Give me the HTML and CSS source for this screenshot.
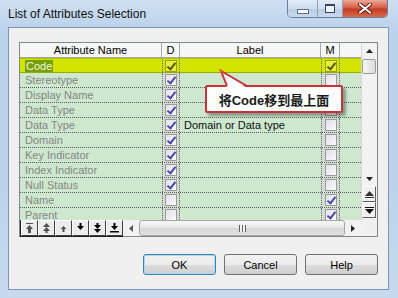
FILE: index.html
```html
<!DOCTYPE html>
<html lang="en">
<head>
    <meta charset="UTF-8">
    <title>List of Attributes Selection</title>
    <link rel="stylesheet" href="styles.css">
</head>
<body>
    <div class="window">
        <div class="titlebar">
            <span class="title">List of Attributes Selection</span>
            <div class="caption">
                <span class="cb min"><span class="dash"></span></span>
                <span class="cb max"><span class="square"></span></span>
                <span class="cb close">
                    <svg width="14" height="11" viewBox="0 0 14 11"><path d="M2 1.5 L12 9.5 M12 1.5 L2 9.5" stroke="#5a1a10" stroke-width="4" stroke-linecap="round"/><path d="M2 1.5 L12 9.5 M12 1.5 L2 9.5" stroke="#fff" stroke-width="2.2" stroke-linecap="round"/></svg>
                </span>
            </div>
        </div>
        <div class="client">
            <div class="gridbox">
                <div class="table">
                    <div class="row head">
                        <div class="c name">Attribute Name</div>
                        <div class="c d">D</div>
                        <div class="c label">Label</div>
                        <div class="c m">M</div>
                        <div class="c fill"></div>
                    </div>
                    <div class="row sel">
                        <div class="c name"><span class="hl">Code</span></div>
                        <div class="c d"><span class="chk on"></span></div>
                        <div class="c label"></div>
                        <div class="c m"><span class="chk on"></span></div>
                        <div class="c fill"></div>
                    </div>
                    <div class="row">
                        <div class="c name">Stereotype</div>
                        <div class="c d"><span class="chk on"></span></div>
                        <div class="c label"></div>
                        <div class="c m"><span class="chk"></span></div>
                        <div class="c fill"></div>
                    </div>
                    <div class="row">
                        <div class="c name">Display Name</div>
                        <div class="c d"><span class="chk on"></span></div>
                        <div class="c label"></div>
                        <div class="c m"><span class="chk on"></span></div>
                        <div class="c fill"></div>
                    </div>
                    <div class="row">
                        <div class="c name">Data Type</div>
                        <div class="c d"><span class="chk on"></span></div>
                        <div class="c label"></div>
                        <div class="c m"><span class="chk"></span></div>
                        <div class="c fill"></div>
                    </div>
                    <div class="row">
                        <div class="c name">Data Type</div>
                        <div class="c d"><span class="chk on"></span></div>
                        <div class="c label">Domain or Data type</div>
                        <div class="c m"><span class="chk"></span></div>
                        <div class="c fill"></div>
                    </div>
                    <div class="row">
                        <div class="c name">Domain</div>
                        <div class="c d"><span class="chk on"></span></div>
                        <div class="c label"></div>
                        <div class="c m"><span class="chk"></span></div>
                        <div class="c fill"></div>
                    </div>
                    <div class="row">
                        <div class="c name">Key Indicator</div>
                        <div class="c d"><span class="chk on"></span></div>
                        <div class="c label"></div>
                        <div class="c m"><span class="chk"></span></div>
                        <div class="c fill"></div>
                    </div>
                    <div class="row">
                        <div class="c name">Index Indicator</div>
                        <div class="c d"><span class="chk on"></span></div>
                        <div class="c label"></div>
                        <div class="c m"><span class="chk"></span></div>
                        <div class="c fill"></div>
                    </div>
                    <div class="row">
                        <div class="c name">Null Status</div>
                        <div class="c d"><span class="chk on"></span></div>
                        <div class="c label"></div>
                        <div class="c m"><span class="chk"></span></div>
                        <div class="c fill"></div>
                    </div>
                    <div class="row">
                        <div class="c name">Name</div>
                        <div class="c d"><span class="chk"></span></div>
                        <div class="c label"></div>
                        <div class="c m"><span class="chk on"></span></div>
                        <div class="c fill"></div>
                    </div>
                    <div class="row">
                        <div class="c name">Parent</div>
                        <div class="c d"><span class="chk"></span></div>
                        <div class="c label"></div>
                        <div class="c m"><span class="chk on"></span></div>
                        <div class="c fill"></div>
                    </div>
                </div>

                <div class="vscroll">
                    <div class="arrow">
                        <svg width="7" height="4" viewBox="0 0 7 4"><path d="M3.5 0 L7 4 H0 Z" fill="#222"/></svg>
                    </div>
                    <div class="vthumb"></div>
                    <div class="track"></div>
                    <div class="arrow">
                        <svg width="7" height="4" viewBox="0 0 7 4"><path d="M0 0 H7 L3.5 4 Z" fill="#222"/></svg>
                    </div>
                    <div class="vbtn">
                        <svg width="9" height="7" viewBox="0 0 9 7"><path d="M4.5 0 L9 5 H0 Z" fill="#333"/><rect x="0" y="6" width="9" height="1" fill="#333"/></svg>
                    </div>
                    <div class="vbtn">
                        <svg width="9" height="7" viewBox="0 0 9 7"><rect x="0" y="0" width="9" height="1" fill="#111"/><path d="M0 2 H9 L4.5 7 Z" fill="#111"/></svg>
                    </div>
                </div>

                <div class="hbar">
                    <div class="tools">
                        <span class="tb dim"><svg width="9" height="10" viewBox="0 0 9 10"><rect x="1" y="0" width="7" height="1"/><path d="M4.5 2 L8 6 H6 V10 H3 V6 H1 Z"/></svg></span>
                        <span class="tb dim"><svg width="9" height="10" viewBox="0 0 9 10"><path d="M4.5 0 L8 4 H1 Z M4.5 4 L8 8 H1 Z"/><rect x="3.5" y="8" width="2" height="2"/></svg></span>
                        <span class="tb dim"><svg width="9" height="10" viewBox="0 0 9 10"><path d="M4.5 3 L7.5 6 H5.5 V9 H3.5 V6 H1.5 Z"/></svg></span>
                        <span class="tb"><svg width="9" height="10" viewBox="0 0 9 10"><path d="M3.5 0 H5.5 V3 H8 L4.5 7 L1 3 H3.5 Z"/></svg></span>
                        <span class="tb"><svg width="9" height="10" viewBox="0 0 9 10"><rect x="3.5" y="0" width="2" height="2"/><path d="M1 2 H8 L4.5 6 Z M1 6 H8 L4.5 10 Z"/></svg></span>
                        <span class="tb"><svg width="9" height="10" viewBox="0 0 9 10"><path d="M3.5 0 H5.5 V3 H8 L4.5 7 L1 3 H3.5 Z"/><rect x="0" y="8" width="9" height="1.5"/></svg></span>
                    </div>
                    <div class="harrow">
                        <svg width="4" height="7" viewBox="0 0 4 7"><path d="M4 0 V7 L0 3.5 Z" fill="#555"/></svg>
                    </div>
                    <div class="hthumb"><span class="grip"></span></div>
                    <div class="harrow">
                        <svg width="4" height="7" viewBox="0 0 4 7"><path d="M0 0 V7 L4 3.5 Z" fill="#222"/></svg>
                    </div>
                </div>
                <div class="corner"></div>

                <div class="callout">
                    <span>将Code移到最上面</span>
                </div>
                <svg class="pointer" width="32" height="20" viewBox="0 0 32 20">
                    <path d="M8 19 L2 2 L28 19 Z" fill="#fff"/>
                    <path d="M8 17 L2 2 L28 17" fill="none" stroke="#c8323a" stroke-width="2"/>
                    <circle cx="2.5" cy="2.5" r="1.5" fill="#e06a20"/>
                </svg>
            </div>

            <div class="buttons">
                <button class="btn default">OK</button>
                <button class="btn">Cancel</button>
                <button class="btn">Help</button>
            </div>
        </div>
    </div>
</body>
</html>
```

FILE: styles.css
```css
body {
    margin: 0;
    font-family: "Liberation Sans", Arial, sans-serif;
}

.window {
    width: 398px;
    height: 298px;
    box-sizing: border-box;
    padding: 0 9px 8px 8px;
    display: flex;
    flex-direction: column;
    background: linear-gradient(to bottom, #cfdff1 0, #bcd3ec 28px, #bdd3eb 60%, #c6d9ee 100%);
}

.titlebar {
    height: 27px;
    display: flex;
    align-items: flex-start;
}

.title {
    font-size: 12px;
    color: #111;
    padding-top: 7px;
}

.caption {
    margin-left: auto;
    margin-right: 1px;
    display: flex;
    height: 18px;
    border: 1px solid #6a7f99;
    border-top: none;
    border-radius: 0 0 5px 5px;
    overflow: hidden;
    box-sizing: border-box;
}

.cb {
    display: flex;
    align-items: center;
    justify-content: center;
    box-sizing: border-box;
}

.cb.min {
    width: 30px;
    border-right: 1px solid #8ba1bc;
    background: linear-gradient(#e3ecf7, #cddcee 50%, #b9cce3 51%, #c9daee);
}

.cb.max {
    width: 25px;
    border-right: 1px solid #8ba1bc;
    background: linear-gradient(#e3ecf7, #cddcee 50%, #b9cce3 51%, #c9daee);
}

.cb.close {
    width: 44px;
    background: linear-gradient(#eaa898, #d65a42 48%, #c23a20 52%, #d76a4c);
}

.dash {
    width: 10px;
    height: 3px;
    margin-top: 6px;
    background: #fff;
    border: 1px solid #5c6f86;
}

.square {
    width: 8px;
    height: 6px;
    border: 1px solid #34465c;
    border-top-width: 2px;
    background: #eef3fa;
}

.client {
    flex: 1;
    background: #f0f0f0;
    border: 1px solid #7f97b4;
    padding: 14px 10px 0 10px;
}

.gridbox {
    position: relative;
    display: grid;
    grid-template-columns: 341px 16px;
    grid-template-rows: 177px 16px;
    border: 1px solid #828790;
    background: #f4f4f4;
}

.table {
    overflow: hidden;
    background: #cde8cf;
}

.row {
    display: flex;
    height: 15px;
    box-sizing: border-box;
    border-bottom: 1px dotted #5a5a5a;
    font-size: 11px;
    line-height: 14px;
}

.c {
    box-sizing: border-box;
    white-space: nowrap;
    overflow: hidden;
}

.c.name {
    width: 142px;
    padding-left: 5px;
    color: #858585;
}

.c.d {
    width: 18px;
    border-left: 1px dotted #6a6a6a;
    border-right: 1px dotted #6a6a6a;
    display: flex;
    align-items: center;
    justify-content: center;
    background: #d3ddd3;
}

.c.label {
    width: 141px;
    padding-left: 4px;
    color: #111;
}

.c.m {
    width: 19px;
    border-left: 1px dotted #6a6a6a;
    border-right: 1px dotted #6a6a6a;
    display: flex;
    align-items: center;
    justify-content: center;
    background: #d3ddd3;
}

.c.fill {
    width: 21px;
}

.row.head {
    background: #f7f7f7;
    border-bottom: 1px solid #a3a3a3;
    color: #000;
}

.row.head .c {
    text-align: center;
    color: #000;
    background: #f7f7f7;
    border-left: none;
    border-right: 1px solid #a8a8a8;
    padding-left: 0;
}

.row.head .c.fill {
    border-right: none;
}

.row.sel {
    background: #d2e500;
    border-top: 1px solid #b4c400;
    border-bottom: 1px solid #9aa800;
    height: 15px;
}

.row.sel .c.d,
.row.sel .c.m {
    background: #d2e500;
}

.hl {
    background: #76a000;
    color: #f4f8e0;
    padding: 0 1px;
}

.chk {
    position: relative;
    width: 12px;
    height: 12px;
    box-sizing: border-box;
    border: 1px solid #9a9a9a;
    background: linear-gradient(135deg, #e0e0ea, #fafafa);
}

.chk.on::after {
    content: "";
    position: absolute;
    left: 3px;
    top: 0;
    width: 3px;
    height: 7px;
    border: solid #4a48a8;
    border-width: 0 2px 2px 0;
    transform: rotate(38deg);
}

.row.sel .chk {
    background: #e4ef40;
    border-color: #9aa400;
}

.row.sel .chk.on::after {
    border-color: #5a5a00;
}

.vscroll {
    display: flex;
    flex-direction: column;
    background: #f2f2f2;
    border-left: 1px solid #d8d8d8;
}

.arrow {
    height: 15px;
    display: flex;
    align-items: center;
    justify-content: center;
}

.vthumb {
    height: 13px;
    margin: 1px 1px 0 0;
    border: 1px solid #9a9a9a;
    border-radius: 2px;
    background: linear-gradient(to right, #f6f6f6, #dcdcdc);
}

.track {
    flex: 1;
}

.vbtn {
    height: 16px;
    margin-right: 1px;
    box-sizing: border-box;
    border: 1px solid;
    border-color: #fff #606060 #606060 #fff;
    background: #f0f0f0;
    display: flex;
    align-items: center;
    justify-content: center;
}

.vbtn:last-child {
    margin-bottom: 2px;
}

.hbar {
    display: flex;
    align-items: center;
    background: #f2f2f2;
}

.tools {
    display: flex;
    border-bottom: 1px solid #202020;
    border-left: 1px solid #202020;
}

.tb {
    width: 17px;
    height: 16px;
    box-sizing: border-box;
    border: 1px solid;
    border-color: #fff #404040 #404040 #fff;
    background: #ececec;
    display: flex;
    align-items: center;
    justify-content: center;
    fill: #000;
}

.tb.dim {
    fill: #505050;
}

.harrow {
    width: 16px;
    height: 16px;
    display: flex;
    align-items: center;
    justify-content: center;
}

.hthumb {
    flex: 1;
    height: 14px;
    border: 1px solid #a5a5a5;
    border-radius: 3px;
    background: linear-gradient(#f7f7f7, #e6e6e6 50%, #d6d6d6 51%, #e0e0e0);
    display: flex;
    align-items: center;
    justify-content: center;
}

.grip {
    width: 7px;
    height: 7px;
    background: repeating-linear-gradient(to right, #5f5f5f 0 1px, #f4f4f4 1px 3px);
}

.corner {
    background: #f0f0f0;
}

.callout {
    position: absolute;
    left: 185px;
    top: 42px;
    width: 138px;
    height: 28px;
    box-sizing: border-box;
    border: 2px solid #c8323a;
    border-radius: 2px;
    background: rgba(255, 255, 255, 0.94);
    box-shadow: 3px 3px 3px rgba(0, 0, 0, 0.35);
    display: flex;
    align-items: center;
    justify-content: center;
    font-family: "Liberation Sans", "Noto Sans CJK SC", sans-serif;
    font-weight: bold;
    font-size: 13px;
    color: #1a1a1a;
}

.pointer {
    position: absolute;
    left: 199px;
    top: 26px;
}

.buttons {
    display: flex;
    justify-content: flex-end;
    gap: 8px;
    margin-top: 17px;
}

.btn {
    width: 73px;
    height: 21px;
    box-sizing: border-box;
    border: 1px solid #707070;
    border-radius: 3px;
    background: linear-gradient(#f2f2f2, #ebebeb 50%, #dddddd 51%, #cfcfcf);
    font-family: "Liberation Sans", Arial, sans-serif;
    font-size: 11px;
    color: #000;
    padding: 0;
}

.btn.default {
    border-color: #3c7fb1;
    box-shadow: inset 0 0 0 1px #a6dcf5;
}
```
